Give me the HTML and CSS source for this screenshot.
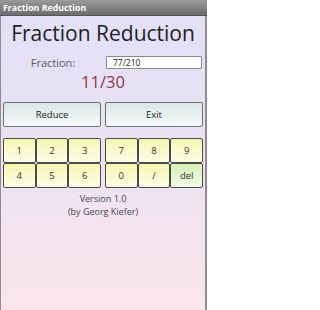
FILE: index.html
```html
<!DOCTYPE html>
<html>
<head>
<meta charset="utf-8">
<link rel="stylesheet" href="styles.css">
</head>
<body>
<div class="screen">
  <div class="titlebar">Fraction Reduction</div>
  <div class="content">
    <h1 class="heading">Fraction Reduction</h1>
    <div class="input-row">
      <div class="label">Fraction:</div>
      <div class="field">77/210</div>
    </div>
    <div class="result">11/30</div>
    <div class="actions">
      <div class="btn">Reduce</div>
      <div class="btn">Exit</div>
    </div>
    <div class="keypad">
      <div class="keys">
        <div class="key">1</div>
        <div class="key">2</div>
        <div class="key">3</div>
        <div class="key">4</div>
        <div class="key">5</div>
        <div class="key">6</div>
      </div>
      <div class="keys">
        <div class="key">7</div>
        <div class="key">8</div>
        <div class="key">9</div>
        <div class="key">0</div>
        <div class="key">/</div>
        <div class="key del">del</div>
      </div>
    </div>
    <div class="version">
      <div class="vline">Version 1.0</div>
      <div class="vline">(by Georg Kiefer)</div>
    </div>
  </div>
</div>
</body>
</html>
```
FILE: styles.css
```css
html, body {
  margin: 0;
  padding: 0;
}
body {
  width: 207px;
  height: 310px;
  overflow: hidden;
  font-family: "Open Sans", "Noto Sans", sans-serif;
}
.screen {
  width: 207px;
  height: 310px;
  box-sizing: border-box;
  border-left: 1px solid #8e8c92;
  border-right: 2px solid #8e8c92;
  background: linear-gradient(#e2dff6 0%, #e9e2f4 45%, #f4e4ee 75%, #fae6ea 100%);
  display: flex;
  flex-direction: column;
}
.titlebar {
  height: 16px;
  line-height: 16px;
  margin: 0 -2px 0 -1px;
  padding-left: 3px;
  background: linear-gradient(#9a9a9a, #6c6c6c);
  border-bottom: 1px solid #555;
  color: #fff;
  font-weight: bold;
  font-size: 8.8px;
  box-sizing: border-box;
}
.content {
  padding: 0 2px 0 2px;
  display: flex;
  flex-direction: column;
}
.heading {
  margin: 5px 0 0 0;
  font-weight: normal;
  font-size: 21px;
  line-height: 24px;
  color: #1e1e24;
  text-align: center;
}
.input-row {
  margin-top: 11px;
  display: flex;
  gap: 3px;
  align-items: center;
}
.label {
  width: 100px;
  text-align: center;
  font-size: 11px;
  line-height: 13px;
  color: #5a5a62;
}
.field {
  flex: 1;
  margin-right: 1px;
  height: 13px;
  box-sizing: border-box;
  background: #fff;
  border: 1px solid #8a8a8a;
  border-radius: 1px;
  font-size: 8.5px;
  line-height: 11px;
  padding-left: 6px;
  color: #222;
}
.result {
  margin-top: 3px;
  text-align: center;
  font-size: 16.5px;
  line-height: 20px;
  color: #8c3a48;
}
.actions {
  margin-top: 10px;
  display: flex;
  gap: 4px;
}
.btn {
  flex: 1;
  height: 25px;
  box-sizing: border-box;
  border: 1px solid #707070;
  border-radius: 2px;
  background: linear-gradient(#dae6e6, #f6f9f9);
  font-size: 9.5px;
  line-height: 23px;
  text-align: center;
  color: #222;
}
.keypad {
  margin-top: 11px;
  display: flex;
  gap: 4px;
}
.keys {
  flex: 1;
  display: grid;
  grid-template-columns: repeat(3, 1fr);
  grid-auto-rows: 25px;
}
.key {
  box-sizing: border-box;
  border: 1px solid #4a4a4a;
  border-radius: 2px;
  background: linear-gradient(#f6f6b2, #fdfde6);
  font-size: 9.5px;
  line-height: 23px;
  text-align: center;
  color: #333;
}
.key.del {
  background: linear-gradient(#d8f2b8, #f1fbe6);
}
.version {
  margin-top: 5px;
  text-align: center;
  color: #46464e;
}
.vline {
  font-size: 9px;
  line-height: 12.5px;
}
```
